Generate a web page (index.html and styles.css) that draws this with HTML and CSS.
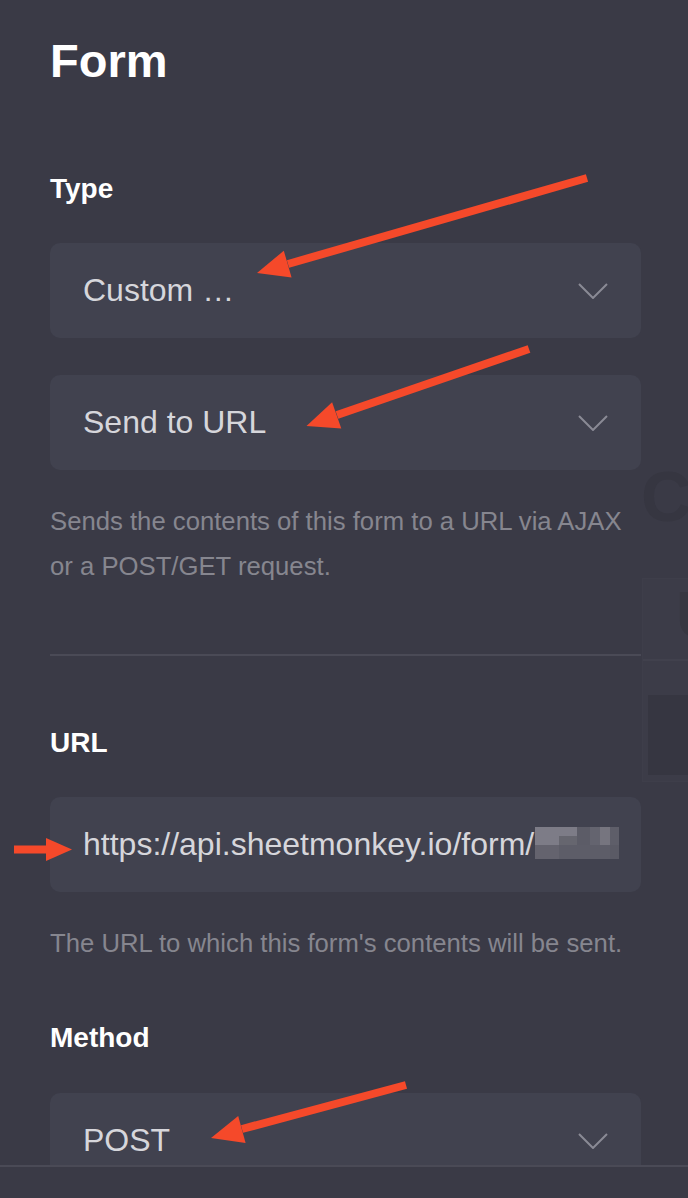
FILE: index.html
```html
<!DOCTYPE html>
<html lang="en">
  <head>
    <meta charset="UTF-8" />
    <meta name="viewport" content="width=device-width, initial-scale=1.0" />
    <title>Form settings</title>
    <link rel="stylesheet" href="styles.css">
  </head>
  <body>
    <div class="page">
      <div class="main">
        <section class="panel">
          <h1 class="title">Form</h1>

          <h2 class="label label-first">Type</h2>
          <div class="select">
            <span>Custom …</span>
            <svg class="chevron" width="30" height="16" viewBox="0 0 30 16"><polyline points="1,1 15,15 29,1" /></svg>
          </div>
          <div class="select select-next">
            <span>Send to URL</span>
            <svg class="chevron" width="30" height="16" viewBox="0 0 30 16"><polyline points="1,1 15,15 29,1" /></svg>
          </div>
          <p class="hint">Sends the contents of this form to a URL via AJAX or a POST/GET request.</p>

          <hr class="divider" />

          <h2 class="label label-url">URL</h2>
          <div class="field">
            <span>https://api.sheetmonkey.io/form/</span>
            <span class="redacted">
              <i class="c1 a"></i><i class="c2 a"></i><i class="c3 c"></i><i class="c4 d"></i><i class="c5 e"></i><i class="c6 f"></i>
              <i class="c1 a"></i><i class="c2 b"></i><i class="c3 c"></i><i class="c4 d"></i><i class="c5 e"></i><i class="c6 f"></i>
              <i class="c1 g"></i><i class="c2 h"></i><i class="c3 h"></i><i class="c4 h"></i><i class="c5 h"></i><i class="c6 k"></i>
            </span>
          </div>
          <p class="hint">The URL to which this form's contents will be sent.</p>

          <h2 class="label label-method">Method</h2>
          <div class="select">
            <span>POST</span>
            <svg class="chevron" width="30" height="16" viewBox="0 0 30 16"><polyline points="1,1 15,15 29,1" /></svg>
          </div>
        </section>

        <!-- page behind the panel, barely showing through -->
        <aside class="backdrop">
          <div class="ghost-letter">C</div>
          <div class="ghost-card">
            <div class="ghost-top"><span>U</span></div>
            <div class="ghost-bottom"></div>
          </div>
        </aside>
      </div>
      <div class="footer"></div>

      <!-- red annotation arrows -->
      <svg class="annotations" width="688" height="1198" viewBox="0 0 688 1198">
        <line x1="587" y1="178" x2="288" y2="264" />
        <polygon points="257,273 291.6,277.5 283.8,250.7" />

        <line x1="529" y1="349" x2="337" y2="415" />
        <polygon points="306.5,426 341.3,428.6 332.1,402.2" />

        <line x1="14" y1="849.5" x2="50" y2="849.5" />
        <polygon points="46,838 46,861 72,849.5" />

        <line x1="406" y1="1085" x2="242" y2="1129" />
        <polygon points="211,1138 245.6,1143.1 238.2,1116.1" />
      </svg>
    </div>
  </body>
</html>
```

FILE: styles.css
```css
* {
  margin: 0;
  padding: 0;
  box-sizing: border-box;
}

body {
  background-color: #3a3a46;
  color: #ffffff;
  font-family: "Liberation Sans", Arial, Helvetica, sans-serif;
}

.page {
  position: relative;
  width: 688px;
  height: 1198px;
  display: flex;
  flex-direction: column;
  overflow: hidden;
}

.main {
  display: flex;
  height: 1165px;
  overflow: hidden;
}

/* Settings panel */
.panel {
  width: 641px;
  flex-shrink: 0;
  padding: 32px 0 0 50px;
}

.title {
  font-size: 47px;
  line-height: 58px;
  font-weight: bold;
  margin-bottom: 82px;
}

.label {
  font-size: 28px;
  line-height: 34px;
  font-weight: bold;
  margin-bottom: 37px;
}

.label-url {
  margin-top: 70px;
}

.label-method {
  margin-top: 55px;
  margin-bottom: 38px;
}

/* Dropdowns and inputs */
.select,
.field {
  width: 591px;
  height: 95px;
  background: #41424f;
  border-radius: 10px;
  display: flex;
  align-items: center;
  padding: 0 33px;
  color: #d6d6db;
  font-size: 32px;
  white-space: nowrap;
}

.select {
  justify-content: space-between;
}

.select-next {
  margin-top: 37px;
}

.chevron {
  fill: none;
  stroke: #8a8a95;
  stroke-width: 2;
}

.hint {
  margin-top: 29px;
  font-size: 25.7px;
  line-height: 45px;
  color: #86868f;
}

.divider {
  border: none;
  height: 2px;
  background: #4a4a56;
  margin-top: 65px;
}

/* Pixelated part of the URL */
.redacted {
  display: inline-grid;
  grid-template-columns: 24px 18px 13px 10px 10px 9px;
  grid-template-rows: 9px 9px 14px;
  margin-left: 1px;
  margin-top: -4px;
}

.redacted i {
  display: block;
}

.redacted .a { background: #7d7c87; }
.redacted .b { background: #66666f; }
.redacted .c { background: #5c5c67; }
.redacted .d { background: #64646f; }
.redacted .e { background: #76757f; }
.redacted .f { background: #5e5e69; }
.redacted .g { background: #64636e; }
.redacted .h { background: #5d5d68; }
.redacted .k { background: #5a5a65; }

/* Backdrop */
.backdrop {
  flex: 1;
  overflow: hidden;
  padding-top: 462px;
}

.ghost-letter {
  font-size: 70px;
  line-height: 70px;
  font-weight: bold;
  color: #363641;
  white-space: nowrap;
}

.ghost-card {
  margin-top: 46px;
  margin-left: 1px;
  width: 60px;
  height: 204px;
  background: #3c3c48;
  border: 1px solid #3e3e4a;
}

.ghost-top {
  height: 82px;
  border-bottom: 2px solid #41414d;
  padding: 4px 0 0 33px;
  font-size: 64px;
  line-height: 64px;
  font-weight: bold;
  color: #373741;
}

.ghost-bottom {
  margin: 34px 0 0 5px;
  height: 80px;
  background: #363641;
}

/* Footer strip */
.footer {
  flex: 1;
  border-top: 2px solid #4a4a56;
  background: #3a3a46;
}

/* Annotation arrows */
.annotations {
  position: absolute;
  top: 0;
  left: 0;
  pointer-events: none;
}

.annotations line {
  stroke: #f5492a;
  stroke-width: 8;
}

.annotations polygon {
  fill: #f5492a;
}
```
